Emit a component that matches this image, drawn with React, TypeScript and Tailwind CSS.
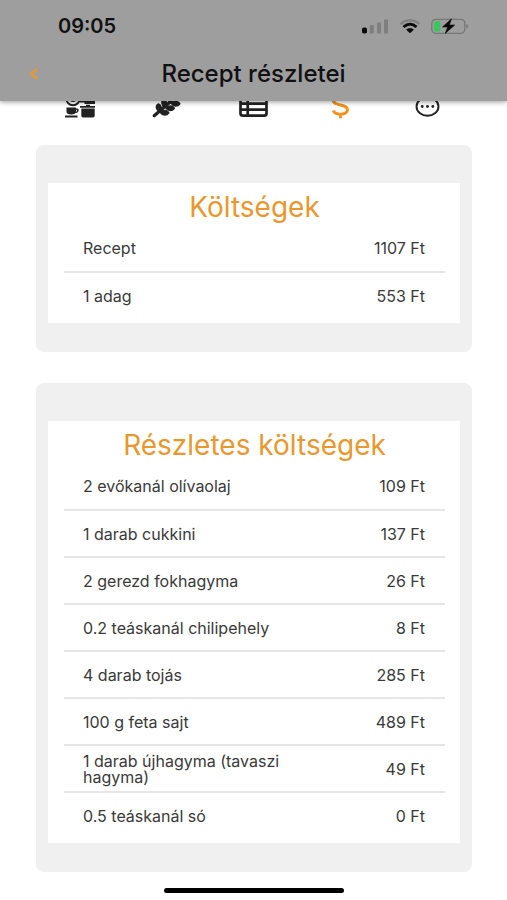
import React from 'react'

interface CostItem {
  name: string
  price: string
}

const summaryCosts: CostItem[] = [
  { name: 'Recept', price: '1107 Ft' },
  { name: '1 adag', price: '553 Ft' },
]

const detailedCosts: CostItem[] = [
  { name: '2 evőkanál olívaolaj', price: '109 Ft' },
  { name: '1 darab cukkini', price: '137 Ft' },
  { name: '2 gerezd fokhagyma', price: '26 Ft' },
  { name: '0.2 teáskanál chilipehely', price: '8 Ft' },
  { name: '4 darab tojás', price: '285 Ft' },
  { name: '100 g feta sajt', price: '489 Ft' },
  { name: '1 darab újhagyma (tavaszi hagyma)', price: '49 Ft' },
  { name: '0.5 teáskanál só', price: '0 Ft' },
]

function SignalIcon() {
  return (
    <svg className="w-[27px] h-4" viewBox="0 0 27 16">
      <rect x="0" y="9.5" width="5" height="6" rx="1.8" fill="#0a0a0a" />
      <rect x="7.8" y="7" width="4" height="8.5" rx="1" fill="#7f7f7f" />
      <rect x="15" y="4.5" width="4" height="11" rx="1" fill="#7f7f7f" />
      <rect x="22" y="1.5" width="4" height="14" rx="1" fill="#7f7f7f" />
    </svg>
  )
}

function WifiIcon() {
  return (
    <svg className="w-[22px] h-4" viewBox="0 0 22 16" fill="none">
      <path d="M1.5 6.2C6.5 1.2 15.5 1.2 20.5 6.2" stroke="#7f7f7f" strokeWidth="2.2" />
      <path d="M4.5 9C8.5 5.3 13.5 5.3 17.5 9" stroke="#0a0a0a" strokeWidth="2.8" />
      <path d="M7.2 11.7C9.2 9.9 12.8 9.9 14.8 11.7L11 15.2Z" fill="#0a0a0a" />
    </svg>
  )
}

function BatteryIcon() {
  return (
    <svg className="w-[38px] h-4" viewBox="0 0 38 16">
      <rect x="0.8" y="1.3" width="33" height="14" rx="4" fill="none" stroke="#777" strokeWidth="1.3" />
      <path d="M35.3 6.2C37.8 6.800 37.8 9.8 35.3 10.4Z" fill="#777" />
      <path d="M5 3.2h4.200v10.200H5a2 2 0 0 1-2-2V5.200a2 2 0 0 1 2-2Z" fill="#37c75a" />
      <path d="M20.5 0.8 11.5 9h5.2l-2.5 6.5L23.7 7h-5.4Z" fill="#0a0a0a" stroke="#0a0a0a" strokeWidth="0.6" />
    </svg>
  )
}

function KitchenIcon() {
  return (
    <svg className="w-8 h-[26px]" viewBox="0 0 32 26" fill="#222">
      <circle cx="9" cy="5.5" r="6.800" fill="none" stroke="#222" strokeWidth="2" />
      <circle cx="9" cy="5.5" r="3.5" />
      <path d="M15.5 7.5h5V6.500H31v4.500H20.500V9.500H15.500Z" />
      <path d="M2.5 14.500h9.500v1h1.500c1.700 0 1.700 4.500-1.500 4.500h-.6c-.8 1.200-2 1.400-4.200 1.400-3.500 0-4.700-1-4.700-3ZM12 16.800v2c1.200 0 1.300-2 0-2Z" />
      <path d="M1 22.500h12.500v2H1Z" />
      <path d="M22 11.800h4v1.200h5v1.800H16V13h6Z" />
      <path d="M17.300 15.500h13.400v6.700c0 1.700-.8 2.300-2.300 2.300h-8.800c-1.500 0-2.300-.6-2.300-2.300Z" />
    </svg>
  )
}

function WheatIcon() {
  return (
    <svg className="w-8 h-[26px]" viewBox="0 0 32 26" fill="#222" stroke="#222">
      <path d="M3.200 22.800 26 3" strokeWidth="3.200" strokeLinecap="round" />
      <g strokeWidth="1.500">
        <path d="M8.500 18.500C4.500 16.500 4.500 12.500 7.500 11c3 1.500 3.800 4.500 1 7.500Z" />
        <path d="M14 14.200C10 12 10 8 13 6.800c3 1.500 3.800 4.400 1 7.400Z" />
        <path d="M19.500 9.600C15.500 7.500 15.500 3.500 18.500 2.300c3 1.500 3.800 4.400 1 7.300Z" />
        <path d="M9 19.200c3.500-2.800 8-2 8.800.6-2 3-6.300 3.200-8.800-.6Z" />
        <path d="M14.500 14.700c3.500-2.800 8-2 8.800.6-2 3-6.300 3.200-8.800-.6Z" />
        <path d="M20 10.200c3.500-2.800 8-2 8.800.6-2 3-6.300 3.200-8.800-.6Z" />
      </g>
    </svg>
  )
}

function TableIcon() {
  return (
    <svg className="w-8 h-[26px]" viewBox="0 0 32 26" fill="none" stroke="#222" strokeWidth="2.700">
      <rect x="3.5" y="1.500" width="26" height="21.200" rx="2.500" />
      <path d="M10.700 2v21M3 10.700h26M3 16.700h26" />
    </svg>
  )
}

function DollarIcon() {
  return (
    <svg className="w-8 h-[26px]" viewBox="0 0 32 26" fill="none" stroke="#ee941d" strokeWidth="2.900">
      <path d="M21.500 4C20.500 2.800 18.500 2.500 16 2.500c-4 0-6.700 1.600-6.700 4.700 0 6.500 14.200 3.200 14.200 9.400 0 3-3 4.600-7 4.600-3.500 0-6.300-1.200-7.300-3.700M16.500 0v2.500M16.500 21v4.200" />
    </svg>
  )
}

function MoreIcon() {
  return (
    <svg className="w-8 h-[26px]" viewBox="0 0 32 26" fill="#222">
      <ellipse cx="16.500" cy="13.500" rx="11" ry="9.300" fill="none" stroke="#222" strokeWidth="1.900" />
      <circle cx="11.200" cy="13.500" r="1.400" />
      <circle cx="16.500" cy="13.500" r="1.400" />
      <circle cx="21.800" cy="13.500" r="1.400" />
    </svg>
  )
}

const tabs = [
  { label: 'Elkészítés', icon: <KitchenIcon /> },
  { label: 'Hozzávalók', icon: <WheatIcon /> },
  { label: 'Tápérték', icon: <TableIcon /> },
  { label: 'Költségek', icon: <DollarIcon /> },
  { label: 'Egyéb', icon: <MoreIcon /> },
]

function Header() {
  return (
    <header className="relative z-10 h-[101px] bg-[#9e9e9e] shadow-[0_1px_5px_rgba(0,0,0,0.4)] text-[#111]">
      <div className="flex items-center justify-between h-[51px] pl-[58px] pr-[38px]">
        <span className="text-[20px] leading-6 font-semibold">09:05</span>
        <div className="flex items-center gap-[10px]">
          <SignalIcon />
          <WifiIcon />
          <BatteryIcon />
        </div>
      </div>
      <div className="grid grid-cols-[68px_1fr_68px] items-center h-[46px]">
        <button type="button" aria-label="Vissza" className="flex justify-center items-center h-full">
          <svg className="w-3 h-4" viewBox="0 0 12 16" fill="none" stroke="#dd9a3c" strokeWidth="3">
            <path d="M9 3 3.5 8 9 13" />
          </svg>
        </button>
        <h1 className="text-center text-[24px] leading-7 font-medium">Recept részletei</h1>
      </div>
    </header>
  )
}

interface CostCardProps {
  title: string
  items: CostItem[]
}

function CostCard({ title, items }: CostCardProps) {
  return (
    <section className="rounded-lg bg-[#f0f0f0] px-3 pt-[38px] pb-[29px]">
      <div className="bg-white pl-4 pr-[15px] pb-1">
        <h2 className="pt-2 h-[42px] text-center text-[28px] leading-8 text-[#e8982e]">{title}</h2>
        <table className="w-full text-[16px] leading-4 text-[#3a3a3a]">
          <tbody>
            {items.map((item) => (
              <tr key={item.name} className="h-[47px] border-b-2 border-[#e6e6e6] last:border-b-0">
                <th scope="row" className="w-2/3 pl-[19px] text-left font-normal">{item.name}</th>
                <td className="pr-5 text-right whitespace-nowrap">{item.price}</td>
              </tr>
            ))}
          </tbody>
        </table>
      </div>
    </section>
  )
}

export default function App() {
  return (
    <div className="min-h-screen bg-white font-['Inter','Liberation_Sans',sans-serif]">
      <Header />
      <nav className="-mt-2 px-[37px] grid grid-cols-5">
        {tabs.map((tab) => (
          <button key={tab.label} type="button" aria-label={tab.label} className="flex justify-center">
            {tab.icon}
          </button>
        ))}
      </nav>
      <main className="pl-9 pr-[35px] pt-[26px] flex flex-col gap-[31px]">
        <CostCard title="Költségek" items={summaryCosts} />
        <CostCard title="Részletes költségek" items={detailedCosts} />
      </main>
      <div className="mx-auto mt-4 h-[5px] w-[180px] rounded-full bg-black" />
    </div>
  )
}
